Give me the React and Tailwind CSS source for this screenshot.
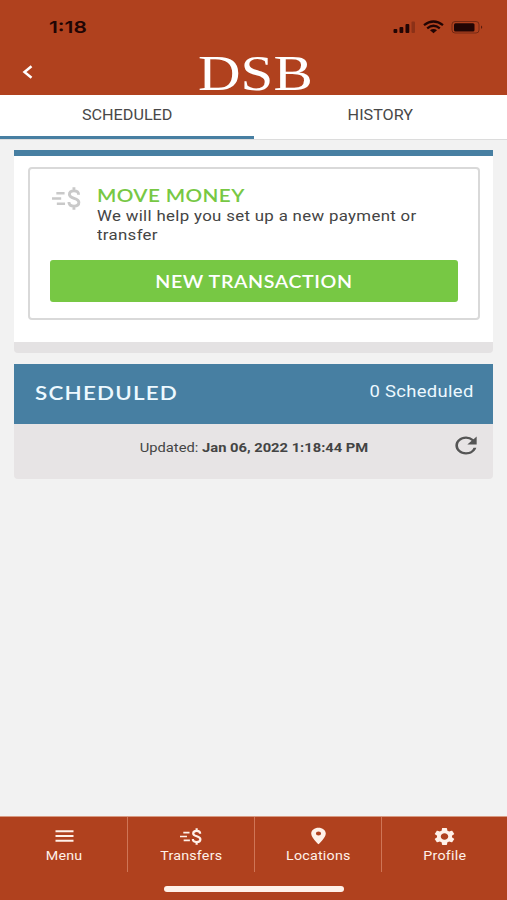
import { MdLocationOn, MdSettings, MdRefresh } from "react-icons/md";

function MoneyIcon({ className }) {
  return (
    <svg className={className} viewBox="0 0 30 24" preserveAspectRatio="none" fill="none" stroke="currentColor">
      <path d="M4.500 6.500h8.500M0 12h9.500M5 17.500h8.500" strokeWidth="2.400" />
      <path d="M27.500 8C27.500 5.200 25.500 4 22.700 4 19.800 4 18 5.500 18 7.800c0 5 9.800 3 9.800 8.200 0 2.500-2 4-5 4s-5.300-1.500-5.300-4.300M22.700 0.300V4M22.700 20v3.700" strokeWidth="3" />
    </svg>
  );
}

function StatusIcons() {
  return (
    <svg className="h-[14px] w-[92px]" viewBox="0 0 92 14" fill="#210504">
      <rect x="0.500" y="9" width="3.800" height="4" rx="1" />
      <rect x="6.500" y="7" width="3.800" height="6" rx="1" />
      <rect x="12.500" y="4" width="3.800" height="9" rx="1" />
      <rect x="18.500" y="1.500" width="3.500" height="11.500" rx="1" opacity="0.25" />
      <g fill="none" stroke="#210504" strokeWidth="2.300">
        <path d="M31 5.200Q40.500 -2.200 50 5.200" />
        <path d="M34.200 8.300Q40.500 3.200 46.800 8.300" />
      </g>
      <path d="M37 10.300Q40.500 7.800 44 10.300L40.500 13.200Z" />
      <rect x="59" y="1.500" width="27" height="11.500" rx="3" fill="none" stroke="#210504" opacity="0.4" />
      <rect x="61" y="3.200" width="20.500" height="8.200" rx="1.500" />
      <path d="M88 5.500q2.500 1.700 0 3.500z" opacity="0.6" />
    </svg>
  );
}

function NavItem({ icon, label, divider }) {
  return (
    <div className={"flex h-[55px] flex-col items-center pt-[9px] " + (divider ? "w-[127px] border-r border-[#cf7556]" : "w-[125px]")}>
      <div className="flex h-[20px] items-center justify-center">{icon}</div>
      <span className="mt-px scale-x-[1.140] text-[12.500px] leading-[18px] tracking-[0.200px] whitespace-nowrap">{label}</span>
    </div>
  );
}

export default function App() {
  return (
    <div className="flex h-[900px] w-[507px] flex-col overflow-hidden bg-[#f2f2f2] font-['Roboto',sans-serif] text-[#444]">
      <header className="h-[95px] bg-[#b0411e]">
        <div className="flex h-[51px] items-start justify-between pt-[18px] pr-[22px] pl-[49px]">
          <span className="origin-left scale-x-[1.270] font-['Inter',sans-serif] text-[16.500px] leading-[19px] font-semibold text-[#210504]">1:18</span>
          <div className="pt-[2px]"><StatusIcons /></div>
        </div>
        <div className="flex h-[41px] items-center pl-[22px] text-white">
          <svg className="h-[14px] w-[11px]" viewBox="0 0 11 14" fill="none" stroke="currentColor" strokeWidth="2.500">
            <path d="M9.500 1.200L2.500 7L9.500 12.800" />
          </svg>
          <span className="mt-[3px] ml-[165px] origin-left scale-x-[1.180] font-['Liberation_Serif',serif] text-[50px] leading-[41px]">DSB</span>
        </div>
      </header>
      <div className="flex h-[45px] border-b border-[#dcdcdc] bg-white text-[14px] text-[#484848]">
        <div className="flex w-[254px] justify-center border-b-[3px] border-[#477fa2] pt-[10px]">
          <span className="scale-x-[1.155] leading-[20px]">SCHEDULED</span>
        </div>
        <div className="flex flex-1 justify-center pt-[10px]">
          <span className="scale-x-[1.155] leading-[20px]">HISTORY</span>
        </div>
      </div>
      <main className="flex-1 px-[14px] pt-[10px]">
        <section className="h-[203px] overflow-hidden rounded-b-[4px] border-t-[6px] border-b-[11px] border-t-[#477fa2] border-b-[#e4e2e3] bg-white px-[13.500px] pt-[11px]">
          <div className="h-[153px] rounded-[4px] border-2 border-[#d9d9d9] px-[20px] pt-[17px]">
            <div className="flex h-[74px]">
              <MoneyIcon className="mt-px ml-[2.500px] h-[23px] w-[29px] text-[#c9c9c9]" />
              <div className="ml-[16px] whitespace-nowrap">
                <h2 className="w-fit origin-left scale-x-[1.255] font-['Lato',sans-serif] text-[16.500px] leading-[20px] font-semibold tracking-[0.300px] text-[#77c844]">MOVE MONEY</h2>
                <p className="mt-px w-fit origin-left scale-x-[1.120] text-[15px] leading-[18.500px] tracking-[0.300px]">We will help you set up a new payment or<br />transfer</p>
              </div>
            </div>
            <button className="flex h-[42px] w-full items-center justify-center rounded-[3px] bg-[#77c844] pt-[2px] text-white">
              <span className="scale-x-[1.190] font-['Lato',sans-serif] text-[16.500px] leading-[20px] font-semibold tracking-[0.500px]">NEW TRANSACTION</span>
            </button>
          </div>
        </section>
        <section className="mt-[11px] h-[115px] overflow-hidden rounded-b-[4px] bg-[#e7e4e5]">
          <div className="flex h-[60px] justify-between bg-[#477fa2] pr-[19px] pl-[21px] text-[#edf9ff]">
            <h2 className="origin-left scale-x-[1.210] pt-[17px] font-['Lato',sans-serif] text-[18.500px] leading-[24px] font-semibold tracking-[1px]">SCHEDULED</h2>
            <span className="origin-right scale-x-[1.150] pt-[17px] text-[16px] leading-[22px] tracking-[0.300px]">0 Scheduled</span>
          </div>
          <div className="flex h-[55px] items-start">
            <div className="flex-1 pt-[15px] pl-[43px] text-center text-[12.500px] leading-[18px]">
              <span className="inline-block scale-x-[1.178]">Updated: <b>Jan 06, 2022 1:18:44 PM</b></span>
            </div>
            <MdRefresh preserveAspectRatio="none" className="mt-[8px] mr-[11px] h-[27px] w-[32px] text-[#555]" />
          </div>
        </section>
      </main>
      <footer className="flex h-[84px] flex-col border-t border-[#d89a82] bg-[#b0411e] text-[#fff1e9]">
        <div className="flex pl-px">
          <NavItem
            divider
            label="Menu"
            icon={
              <svg className="h-[12px] w-[19px]" viewBox="0 0 19 12" stroke="currentColor" strokeWidth="1.900">
                <path d="M0.500 1.200h18M0.500 6h18M0.500 10.800h18" />
              </svg>
            }
          />
          <NavItem divider label="Transfers" icon={<MoneyIcon className="h-[17px] w-[22px]" />} />
          <NavItem divider label="Locations" icon={<MdLocationOn preserveAspectRatio="none" className="h-[20px] w-[25px]" />} />
          <NavItem label="Profile" icon={<MdSettings preserveAspectRatio="none" className="h-[21px] w-[25px]" />} />
        </div>
        <div className="mx-auto mt-[14px] h-[6px] w-[180px] rounded-full bg-[#fff1e9]" />
      </footer>
    </div>
  );
}
